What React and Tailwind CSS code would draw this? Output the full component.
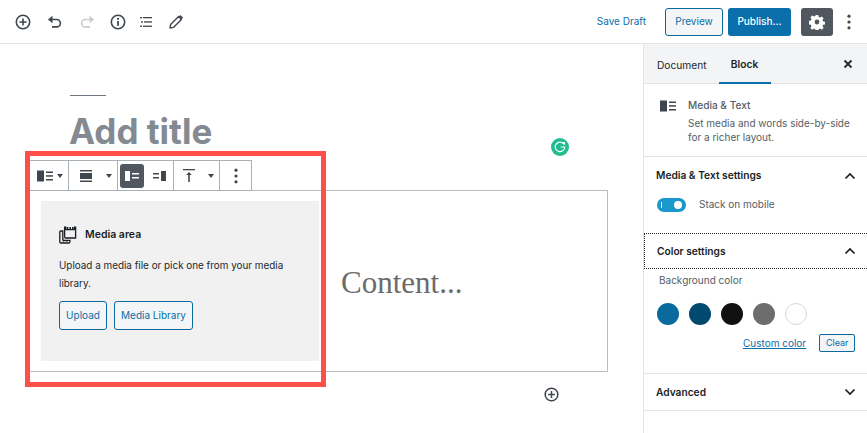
const PlusCircle = ({ size = 18, className = "" }) => (
  <svg width={size} height={size} viewBox="0 0 18 18" fill="none" stroke="#40464d" strokeWidth="1.6" className={className}>
    <circle cx="9" cy="9" r="6.7" />
    <path d="M9 5.4v7.2M5.4 9h7.2" />
  </svg>
);

const Undo = ({ color = "#40464d", flip = false }) => (
  <svg width="16" height="16" viewBox="0 0 16 16" fill="none" className={flip ? "-scale-x-100" : ""}>
    <path d="M4.5 5.5h5.2a3.7 3.7 0 0 1 0 7.4H5" stroke={color} strokeWidth="1.6" />
    <path d="M5.5 1.8v7.4L.9 5.5z" fill={color} />
  </svg>
);

const Info = () => (
  <svg width="18" height="18" viewBox="0 0 18 18" fill="none">
    <circle cx="9" cy="9" r="6.7" stroke="#40464d" strokeWidth="1.6" />
    <rect x="8.1" y="8" width="1.8" height="4.8" fill="#40464d" />
    <rect x="8.1" y="5" width="1.8" height="1.8" fill="#40464d" />
  </svg>
);

const ListIcon = () => (
  <svg width="14" height="14" viewBox="0 0 14 14" fill="#40464d">
    <rect x="1" y="2" width="2" height="1.3" />
    <rect x="4" y="2" width="9" height="1.3" />
    <rect x="2" y="6.3" width="2" height="1.3" />
    <rect x="5" y="6.3" width="8" height="1.3" />
    <rect x="1" y="10.6" width="2" height="1.3" />
    <rect x="4" y="10.6" width="9" height="1.3" />
  </svg>
);

const Pencil = () => (
  <svg width="16" height="16" viewBox="0 0 16 16" fill="none" stroke="#40464d" strokeWidth="1.4">
    <path d="M2.6 10.6 10.6 2.6l2.8 2.8-8 8-3.4.6z" strokeLinejoin="round" />
    <path d="M10.8 2.4 13.6 5.2 15 3.6 12.4 1z" fill="#40464d" stroke="none" />
  </svg>
);

const Gear = () => (
  <svg width="16" height="16" viewBox="0 0 16 16">
    <path fill="#fff" fillRule="evenodd" d="M6.7 1h2.6l.4 2 1.3.6 1.8-1.1 1.8 1.8-1.1 1.8.6 1.3 2 .4v2.6l-2 .4-.6 1.3 1.1 1.8-1.8 1.8-1.8-1.1-1.3.6-.4 2H6.7l-.4-2-1.3-.6-1.8 1.1-1.8-1.8 1.1-1.8-.6-1.3-2-.4V6.8l2-.4.6-1.3-1.1-1.8 1.8-1.8 1.8 1.1 1.3-.6zM8 5.6a2.4 2.4 0 1 0 0 4.8 2.4 2.4 0 0 0 0-4.8z" />
  </svg>
);

const Dots = ({ color = "#40464d" }) => (
  <svg width="4" height="16" viewBox="0 0 4 16" fill={color}>
    <circle cx="2" cy="2.2" r="1.6" />
    <circle cx="2" cy="8" r="1.6" />
    <circle cx="2" cy="13.8" r="1.6" />
  </svg>
);

const MediaTextIcon = ({ width = 16, height = 12 }) => (
  <svg width={width} height={height} viewBox="0 0 16 12" fill="#40464d">
    <rect x="0" y="0.5" width="7" height="11" />
    <rect x="9" y="1.5" width="7" height="1.5" />
    <rect x="9" y="5.2" width="7" height="1.5" />
    <rect x="9" y="9" width="7" height="1.5" />
  </svg>
);

const Caret = () => (
  <svg width="6" height="4" viewBox="0 0 6 4" fill="#40464d">
    <path d="M0 0h6L3 4z" />
  </svg>
);

const Chevron = ({ up = true }) => (
  <svg width="12" height="8" viewBox="0 0 12 8" fill="none" stroke="#191e23" strokeWidth="1.7" className={up ? "" : "rotate-180"}>
    <path d="M1.5 6.5 6 2l4.5 4.500" />
  </svg>
);

const MediaIcon = () => (
  <svg width="18" height="18" viewBox="0 0 18 18" fill="none" stroke="#191e23" strokeWidth="1.3">
    <path d="M5.6 11.400V1.200h1.200v2.400h8.600V1.200h1.200v10.800H5.600" />
    <path d="M8.600 1v2.600M11.200 1v2.600M13.800 1v2.600" strokeWidth="1.500" />
    <path d="M3.800 5H1.900A1.100 1.100 0 0 0 .8 6.100v9.700c0 .7.500 1.200 1.200 1.200h7.700c.7 0 1.200-.5 1.200-1.200V14.400H5.100c-.8 0-1.300-.5-1.300-1.300z" />
    <path d="M3.500 15h1.800M6.500 15h2.300" strokeWidth="1.200" />
  </svg>
);

const SectionHeader = ({ title, up = true }) => (
  <div className="flex items-center justify-between pl-3 pr-[11px] text-[10.2px] font-semibold text-[#191e23]">
    <span>{title}</span>
    <Chevron up={up} />
  </div>
);

const swatches = ["bg-[#0a6a9e]", "bg-[#004a70]", "bg-[#111111]", "bg-[#6d6d6d]", "bg-white border border-[#d6d9dc]"];

export default function App() {
  return (
    <div className="relative w-[867px] h-[433px] overflow-hidden bg-white text-[#191e23] [font-family:Inter,'Liberation_Sans',sans-serif]">
      <header className="flex items-center h-11 border-b border-[#e2e4e7] pl-[14px]">
        <PlusCircle />
        <div className="ml-[15px]"><Undo /></div>
        <div className="ml-4"><Undo color="#c9cdd1" flip /></div>
        <div className="ml-[14px]"><Info /></div>
        <div className="ml-[12px]"><ListIcon /></div>
        <div className="ml-[15px]"><Pencil /></div>
        <div className="ml-auto flex items-center">
          <span className="text-[10px] text-[#0a6ea8]">Save Draft</span>
          <button className="ml-[19px] w-[58px] h-7 rounded-[3px] border border-[#0a6a9e] bg-[#f3f5f6] text-[10px] text-[#0a6ea8]">Preview</button>
          <button className="ml-[5px] w-[63px] h-7 rounded-[3px] bg-[#0a6fab] text-[10px] font-medium text-white">Publish...</button>
          <button className="ml-[10px] w-8 h-7 rounded-[3px] bg-[#50575e] flex items-center justify-center"><Gear /></button>
          <div className="ml-[14px] mr-4 flex"><Dots /></div>
        </div>
      </header>

      <div className="flex h-[389px]">
        <main className="relative w-[643px] shrink-0">
          <div className="ml-[70px] mt-[51px] w-9 h-px bg-[#6c7781]" />
          <h1 className="ml-[69px] mt-[14px] h-[42px] leading-[42px] text-[35px] font-bold text-[#848a91]">Add title</h1>

          <section className="mt-[38px] ml-[29px] w-[579px] h-[182px] border border-[#b5bcc2] flex items-center">
            <div className="ml-[11px] w-[278px] h-40 bg-[#f1f1f1] pl-[18px] pt-[25px]">
              <div className="flex items-center h-[18px] text-[10.5px] font-semibold">
                <MediaIcon />
                <span className="ml-[8px]">Media area</span>
              </div>
              <p className="mt-[12px] w-[240px] text-[9.9px] leading-[18px] text-[#23282d]">Upload a media file or pick one from your media library.</p>
              <div className="mt-[9px] flex gap-[7px]">
                <button className="w-12 h-[29px] rounded-[3px] border border-[#0a6a9e] bg-[#f3f5f6] text-[10px] text-[#0a6ea8]">Upload</button>
                <button className="w-[79px] h-[29px] rounded-[3px] border border-[#0a6a9e] bg-[#f3f5f6] text-[10px] text-[#0a6ea8]">Media Library</button>
              </div>
            </div>
            <p className="ml-[22px] mt-[4px] text-[31px] text-[#6b6b6b] [font-family:'Liberation_Serif',serif]">Content...</p>
          </section>

          <div className="absolute left-[29px] top-[116px] flex h-[31px] w-[223px] border border-[#a9b1b8] bg-white">
            <div className="flex w-[39px] items-center pl-[7px] gap-[4px] border-r border-[#a9b1b8]">
              <MediaTextIcon />
              <Caret />
            </div>
            <div className="flex w-[49px] items-center pl-[11px] gap-[14px] border-r border-[#a9b1b8]">
              <svg width="12" height="12" viewBox="0 0 12 12" fill="#40464d">
                <rect x="0" y="0" width="12" height="1.5" />
                <rect x="0" y="3" width="12" height="6" />
                <rect x="0" y="10.5" width="12" height="1.5" />
              </svg>
              <Caret />
            </div>
            <div className="flex w-14 items-center pl-[2px] border-r border-[#a9b1b8]">
              <div className="flex h-6 w-6 items-center justify-center rounded-[3px] bg-[#50575e]">
                <svg width="14" height="10" viewBox="0 0 14 10" fill="#fff">
                  <rect x="0" y="0" width="5" height="10" />
                  <rect x="7" y="2" width="7" height="1.5" />
                  <rect x="7" y="6" width="7" height="1.5" />
                </svg>
              </div>
              <svg className="ml-[9px]" width="13" height="10" viewBox="0 0 13 10" fill="#40464d">
                <rect x="8" y="0" width="5" height="10" />
                <rect x="0" y="2" width="6" height="1.5" />
                <rect x="0" y="6" width="6" height="1.5" />
              </svg>
            </div>
            <div className="flex w-[46px] items-center pl-[9px] gap-[13px] border-r border-[#a9b1b8]">
              <svg width="12" height="13" viewBox="0 0 12 13" fill="#40464d">
                <rect x="0" y="0" width="12" height="1.3" />
                <path d="M6 3 8.8 6H6.8v7H5.2V6H3.2z" />
              </svg>
              <Caret />
            </div>
            <div className="flex flex-1 items-center justify-center"><Dots /></div>
          </div>

          <div className="absolute left-[551px] top-[94px] flex h-[18px] w-[18px] items-center justify-center rounded-full bg-[#20bd90]">
            <svg width="12" height="12" viewBox="0 0 12 12" fill="none" stroke="#fff" strokeWidth="1.2">
              <path d="M10 3.2A4.8 4.8 0 1 0 10.8 6H6.8" />
              <path d="M8.2 1.5h2.2v2.2" />
            </svg>
          </div>

          <PlusCircle size={17} className="absolute left-[543px] top-[342px]" />
        </main>

        <aside className="flex-1 border-l border-[#e2e4e7]">
          <div className="flex h-10 items-stretch border-b border-[#e2e4e7] bg-[#f3f4f5] text-[10.2px]">
            <span className="ml-[13px] flex items-center pt-1 text-[#23282d]">Document</span>
            <span className="ml-[12px] flex w-[52px] items-center justify-center border-b-2 border-[#0a6fab] pt-1 font-semibold -mb-px">Block</span>
            <svg className="ml-auto mr-[14px] self-center" width="10" height="10" viewBox="0 0 10 10" stroke="#23282d" strokeWidth="1.8">
              <path d="M1.5 1.5l7 7M8.5 1.5l-7 7" />
            </svg>
          </div>

          <div className="flex h-[73px] border-b border-[#e2e4e7] pt-[14px] pl-4">
            <div className="pt-[2px]"><MediaTextIcon /></div>
            <div className="ml-[12px] text-[10.1px] leading-[14px] text-[#555d66]">
              <div className="font-medium">Media &amp; Text</div>
              <div className="mt-[4px] w-[170px] text-[10px]">Set media and words side-by-side for a richer layout.</div>
            </div>
          </div>

          <div className="h-[76px] pt-[11px]">
            <SectionHeader title="Media & Text settings" />
            <div className="mt-[14px] flex items-center pl-[13px]">
              <div className="flex h-[14px] w-[29px] items-center justify-between rounded-full bg-[#1a98cd] px-[4px]">
                <span className="h-[6px] w-px bg-white" />
                <span className="h-[8px] w-[8px] rounded-full bg-white" />
              </div>
              <span className="ml-[13px] text-[10px] text-[#555d66]">Stack on mobile</span>
            </div>
          </div>

          <div className="flex h-[36px] flex-col justify-center border border-dotted border-[#23282d] border-r-0 pt-[1px]">
            <SectionHeader title="Color settings" />
          </div>

          <div className="h-[105px] border-b border-[#e2e4e7] pl-[13px] pt-[4px]">
            <div className="ml-[2px] text-[10px] text-[#555d66]">Background color</div>
            <div className="mt-[15px] flex gap-[10px]">
              {swatches.map((s, i) => (
                <span key={i} className={`h-[22px] w-[22px] rounded-full ${s}`} />
              ))}
            </div>
            <div className="mt-[9px] flex items-center">
              <a className="ml-[86px] text-[10px] text-[#0a6ea8] underline">Custom color</a>
              <button className="ml-[13px] h-[18px] w-9 rounded-[2px] border border-[#0a6a9e] bg-[#f3f5f6] text-[9px] text-[#0a6ea8]">Clear</button>
            </div>
          </div>

          <div className="flex h-[37px] flex-col justify-center border-b border-[#e2e4e7] pt-[1px]">
            <SectionHeader title="Advanced" up={false} />
          </div>
        </aside>
      </div>

      <div className="absolute left-[25px] top-[151px] h-[236px] w-[301px] border-[5px] border-[#ff4f49] pointer-events-none" />
    </div>
  );
}
